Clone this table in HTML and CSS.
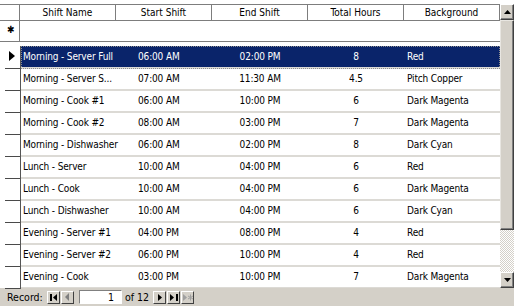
FILE: index.html
```html
<!DOCTYPE html>
<html>
<head>
<meta charset="utf-8">
<link rel="stylesheet" href="styles.css">
</head>
<body>
<div class="window">
  <div class="top">
    <div class="sheet">
      <div class="hdr">
        <div class="sel"></div>
        <div class="hc">Shift Name</div>
        <div class="hc">Start Shift</div>
        <div class="hc">End Shift</div>
        <div class="hc">Total Hours</div>
        <div class="hc">Background</div>
      </div>
      <div class="newrow">
        <div class="sel star">&#x2731;</div>
        <div class="nr-body"></div>
      </div>
      <div class="rows">
        <div class="row current">
          <div class="rs"><span class="tri"></span></div>
          <div class="cells"><span class="c name">Morning - Server Full</span><span class="c t1">06:00 AM</span><span class="c t2">02:00 PM</span><span class="c hrs">8</span><span class="c bg">Red</span></div>
        </div>
        <div class="row">
          <div class="rs"></div>
          <div class="cells"><span class="c name">Morning - Server S...</span><span class="c t1">07:00 AM</span><span class="c t2">11:30 AM</span><span class="c hrs">4.5</span><span class="c bg">Pitch Copper</span></div>
        </div>
        <div class="row">
          <div class="rs"></div>
          <div class="cells"><span class="c name">Morning - Cook #1</span><span class="c t1">06:00 AM</span><span class="c t2">10:00 PM</span><span class="c hrs">6</span><span class="c bg">Dark Magenta</span></div>
        </div>
        <div class="row">
          <div class="rs"></div>
          <div class="cells"><span class="c name">Morning - Cook #2</span><span class="c t1">08:00 AM</span><span class="c t2">03:00 PM</span><span class="c hrs">7</span><span class="c bg">Dark Magenta</span></div>
        </div>
        <div class="row">
          <div class="rs"></div>
          <div class="cells"><span class="c name">Morning - Dishwasher</span><span class="c t1">06:00 AM</span><span class="c t2">02:00 PM</span><span class="c hrs">8</span><span class="c bg">Dark Cyan</span></div>
        </div>
        <div class="row">
          <div class="rs"></div>
          <div class="cells"><span class="c name">Lunch - Server</span><span class="c t1">10:00 AM</span><span class="c t2">04:00 PM</span><span class="c hrs">6</span><span class="c bg">Red</span></div>
        </div>
        <div class="row">
          <div class="rs"></div>
          <div class="cells"><span class="c name">Lunch - Cook</span><span class="c t1">10:00 AM</span><span class="c t2">04:00 PM</span><span class="c hrs">6</span><span class="c bg">Dark Magenta</span></div>
        </div>
        <div class="row">
          <div class="rs"></div>
          <div class="cells"><span class="c name">Lunch - Dishwasher</span><span class="c t1">10:00 AM</span><span class="c t2">04:00 PM</span><span class="c hrs">6</span><span class="c bg">Dark Cyan</span></div>
        </div>
        <div class="row">
          <div class="rs"></div>
          <div class="cells"><span class="c name">Evening - Server #1</span><span class="c t1">04:00 PM</span><span class="c t2">08:00 PM</span><span class="c hrs">4</span><span class="c bg">Red</span></div>
        </div>
        <div class="row">
          <div class="rs"></div>
          <div class="cells"><span class="c name">Evening - Server #2</span><span class="c t1">06:00 PM</span><span class="c t2">10:00 PM</span><span class="c hrs">4</span><span class="c bg">Red</span></div>
        </div>
        <div class="row last">
          <div class="rs"></div>
          <div class="cells"><span class="c name">Evening - Cook</span><span class="c t1">03:00 PM</span><span class="c t2">10:00 PM</span><span class="c hrs">7</span><span class="c bg">Dark Magenta</span></div>
        </div>
      </div>
    </div>
    <div class="vscroll">
      <div class="sbtn"><svg width="7" height="4" viewBox="0 0 7 4"><path d="M3.5 0L7 4H0z" fill="#000"/></svg></div>
      <div class="thumb"></div>
      <div class="track"></div>
      <div class="sbtn"><svg width="7" height="4" viewBox="0 0 7 4"><path d="M0 0H7L3.5 4z" fill="#000"/></svg></div>
    </div>
  </div>
  <div class="nav">
    <span class="lbl">Record:</span>
    <span class="nb first"><svg width="8" height="7" viewBox="0 0 8 7"><rect x="0" y="0" width="2" height="7" fill="#000"/><path d="M7 0V7L3 3.5z" fill="#000"/></svg></span>
    <span class="nb prev dis"><svg width="5" height="8" viewBox="0 0 5 8"><path d="M4 0V8L0 4z" fill="#808080"/></svg></span>
    <span class="box">1</span>
    <span class="of">of 12</span>
    <span class="nb next"><svg width="4" height="7" viewBox="0 0 4 7"><path d="M0 0V7L4 3.5z" fill="#000"/></svg></span>
    <span class="nb lastb"><svg width="8" height="7" viewBox="0 0 8 7"><path d="M0 0V7L4 3.5z" fill="#000"/><rect x="6" y="0" width="2" height="7" fill="#000"/></svg></span>
    <span class="nb newb dis"><svg width="10" height="7" viewBox="0 0 10 7"><path d="M0 0V7L4 3.5z" fill="#a0a0a0"/><path d="M7.5 0.5V6.5M5 2L10 5M10 2L5 5" stroke="#a0a0a0" stroke-width="1"/></svg></span>
  </div>
</div>
</body>
</html>
```
FILE: styles.css
```css
* { box-sizing: border-box; }
html, body { margin: 0; padding: 0; background: #fff; }
body {
  font-family: "DejaVu Sans Condensed", "DejaVu Sans", sans-serif;
  font-stretch: condensed;
  font-size: 10px;
  color: #000;
}
.window { width: 520px; height: 306px; display: flex; flex-direction: column; overflow: hidden; }
.top { display: flex; height: 288px; padding-top: 4px; }
.sheet { width: 500px; display: flex; flex-direction: column; }

.hdr {
  display: grid;
  grid-template-columns: 20px repeat(5, 96px);
  height: 17px;
  border-top: 1px solid #7d7d7d;
  border-bottom: 1px solid #7d7d7d;
}
.hdr .sel { border-right: 1px solid #7d7d7d; }
.hc {
  border-right: 1px solid #7d7d7d;
  text-align: center;
  line-height: 15px;
}
.newrow {
  display: grid;
  grid-template-columns: 20px 1fr;
  height: 23px;
  border-bottom: 1px solid #7d7d7d;
}
.newrow .sel { border-right: 1px solid #7d7d7d; }
.star { font-size: 10px; line-height: 17px; padding-left: 7px; font-weight: bold; }

.rows { padding-top: 4px; display: flex; flex-direction: column; }
.row {
  display: grid;
  grid-template-columns: 21px 479px;
  height: 22px;
}
.rs {
  border-right: 1px solid #555;
  position: relative;
  border-bottom: 1px solid #4a4a4a;
  margin-left: 5px;
}
.cells {
  display: grid;
  grid-template-columns: 95px 96px 96px 96px 96px;
  border-bottom: 2px solid #dcdad5;
  line-height: 21px;
  white-space: nowrap;
  letter-spacing: -0.15px;
}
.c { overflow: visible; }
.name { padding-left: 2px; }
.t1 { padding-left: 22px; }
.t2 { text-align: center; }
.hrs { text-align: center; }
.bg { padding-left: 3px; }

.row.current .cells {
  background: #0a246a;
  color: #fff;
  outline: 1px dotted #8f8f8f;
  outline-offset: -1px;
}
.tri {
  position: absolute;
  left: 4px;
  top: 5px;
  width: 0; height: 0;
  border-top: 5px solid transparent;
  border-bottom: 5px solid transparent;
  border-left: 6px solid #000;
}

.vscroll {
  width: 14px;
  display: flex;
  flex-direction: column;
}
.sbtn {
  height: 16px;
  background: #d4d0c8;
  border-top: 1px solid #fff;
  border-left: 1px solid #fff;
  border-right: 1px solid #404040;
  border-bottom: 1px solid #404040;
  box-shadow: inset -1px -1px 0 #808080;
  display: flex;
  align-items: center;
  justify-content: center;
}
.thumb {
  height: 210px;
  background: #d4d0c8;
  border-top: 1px solid #e8e6e1;
  border-left: 1px solid #e8e6e1;
  border-right: 1px solid #404040;
  border-bottom: 1px solid #404040;
  box-shadow: inset -1px -1px 0 #808080;
}
.track {
  flex: 1;
  background: repeating-conic-gradient(#fff 0 25%, #d4d0c8 0 50%) 0 0 / 2px 2px;
}

.nav {
  width: 514px;
  height: 18px;
  background: #d4d0c8;
  display: flex;
  align-items: center;
  padding-left: 7px;
  font-size: 10.5px;
}
.lbl { width: 40px; }
.nb {
  width: 13px;
  height: 13px;
  background: #d4d0c8;
  border-top: 1px solid #fff;
  border-left: 1px solid #fff;
  border-right: 1px solid #404040;
  border-bottom: 1px solid #404040;
  display: flex;
  align-items: center;
  justify-content: center;
  margin-right: 1px;
}
.box {
  width: 43px;
  height: 14px;
  background: #fff;
  border-top: 1px solid #808080;
  border-left: 1px solid #808080;
  border-right: 1px solid #fff;
  border-bottom: 1px solid #fff;
  text-align: right;
  padding-right: 7px;
  line-height: 12px;
  margin-left: 4px;
}
.of { width: 31px; padding-left: 3px; }
```
